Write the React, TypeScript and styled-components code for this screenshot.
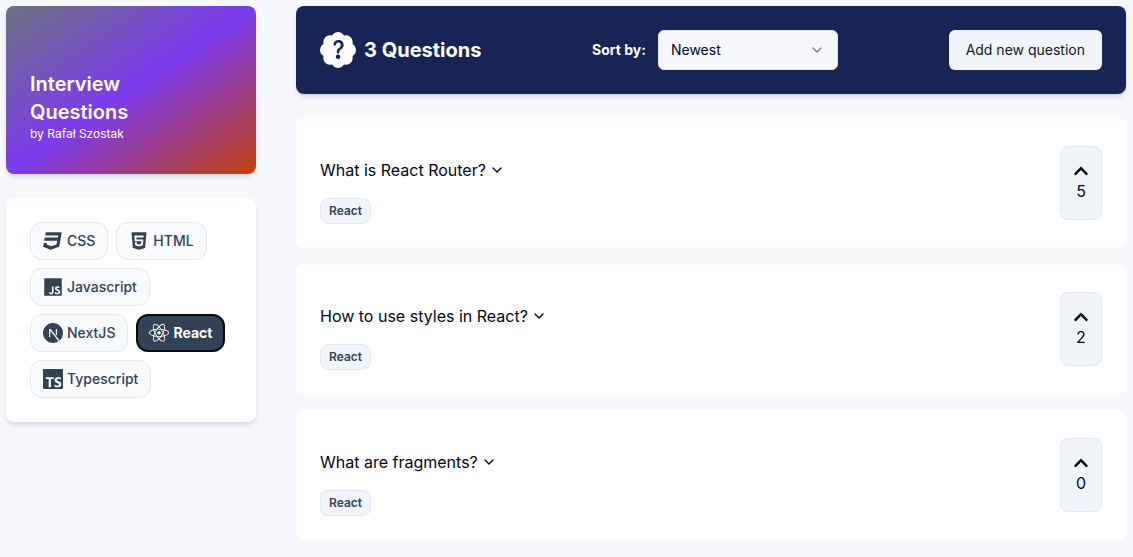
import React from "react";
import styled, { createGlobalStyle } from "styled-components";
import { FaCss3, FaChevronUp } from "react-icons/fa";
import { IoLogoHtml5, IoLogoJavascript } from "react-icons/io5";
import { SiNextdotjs, SiTypescript } from "react-icons/si";
import { GrReactjs } from "react-icons/gr";
import { BsPatchQuestionFill } from "react-icons/bs";
import { FiChevronDown } from "react-icons/fi";
import { ChevronDown } from "lucide-react";

const GlobalStyle = createGlobalStyle`
  *, *::before, *::after { box-sizing: border-box; }
  body {
    margin: 0;
    background: #f7f8fd;
    color: #020617;
    font-family: Inter, "Liberation Sans", sans-serif;
    font-size: 16px;
    line-height: 24px;
  }
  h1, h2, p, ul { margin: 0; padding: 0; }
  ul { list-style: none; }
  button, select { font: inherit; color: inherit; cursor: pointer; }
  svg { display: block; flex: none; }
`;

const shadow = "0 4px 6px -1px rgba(0, 0, 0, 0.1), 0 2px 4px -2px rgba(0, 0, 0, 0.1)";

const Page = styled.div`
  display: grid;
  grid-template-columns: 250px minmax(0, 1fr);
  gap: 40px;
  align-items: start;
  padding: 6px 7px 16px 6px;
`;

const Sidebar = styled.aside`
  display: grid;
  gap: 24px;
`;

const Brand = styled.header`
  padding: 64px 24px 32px;
  border-radius: 8px;
  background: linear-gradient(to bottom right, #6b7280, #7c3aed, #c2410c);
  box-shadow: ${shadow};
  color: #fff;
`;

const BrandTitle = styled.h1`
  font-size: 20px;
  line-height: 28px;
  font-weight: 600;
`;

const BrandAuthor = styled.p`
  font-size: 12px;
  line-height: 16px;
`;

const Filters = styled.nav`
  display: flex;
  flex-wrap: wrap;
  gap: 8px;
  padding: 24px;
  border-radius: 8px;
  background: #fff;
  box-shadow: ${shadow};
`;

const FilterButton = styled.button<{ $active: boolean }>`
  display: flex;
  align-items: center;
  gap: 4px;
  height: 38px;
  padding: 0 ${(p) => (p.$active ? 11 : 12)}px;
  border: ${(p) => (p.$active ? "2px solid #0a0a0a" : "1px solid #e2e8f0")};
  border-radius: 12px;
  background: ${(p) => (p.$active ? "#334155" : "#f8fafc")};
  color: ${(p) => (p.$active ? "#fff" : "#334155")};
  font-size: 14px;
  line-height: 20px;
  font-weight: ${(p) => (p.$active ? 700 : 500)};
`;

const Main = styled.main`
  display: grid;
  gap: 24px;
`;

const Toolbar = styled.div`
  display: flex;
  align-items: center;
  justify-content: space-between;
  padding: 24px;
  border-radius: 8px;
  background: #172554;
  box-shadow: ${shadow};
  color: #fff;
`;

const Count = styled.div`
  display: flex;
  align-items: center;
  gap: 8px;
`;

const CountTitle = styled.h2`
  font-size: 20px;
  line-height: 28px;
  font-weight: 700;
`;

const Sort = styled.div`
  display: flex;
  align-items: center;
  gap: 12px;
`;

const SortLabel = styled.label`
  font-size: 14px;
  line-height: 20px;
  font-weight: 700;
`;

const SelectBox = styled.div`
  display: grid;
  align-items: center;
  width: 180px;
  color: #020617;

  > * { grid-area: 1 / 1; }
  > svg {
    justify-self: end;
    margin-right: 13px;
    opacity: 0.5;
    pointer-events: none;
  }
`;

const Select = styled.select`
  appearance: none;
  width: 100%;
  height: 40px;
  padding: 0 36px 0 12px;
  border: 1px solid #e2e8f0;
  border-radius: 6px;
  background: #f7f8fd;
  font-size: 14px;
`;

const AddButton = styled.button`
  height: 40px;
  padding: 0 17px;
  border: 0;
  border-radius: 6px;
  background: #f1f5f9;
  color: #0f172a;
  font-size: 14px;
  line-height: 20px;
`;

const QuestionList = styled.ul`
  display: grid;
  gap: 16px;
`;

const QuestionCard = styled.li`
  display: flex;
  align-items: center;
  justify-content: space-between;
  padding: 24px;
  border-radius: 8px;
  background: #fff;
`;

const QuestionBody = styled.div`
  display: grid;
  justify-items: start;
  gap: 16px;
  padding-top: 16px;
`;

const QuestionToggle = styled.button`
  display: flex;
  align-items: center;
  gap: 3px;
  padding: 0;
  border: 0;
  background: none;
`;

const Tag = styled.span`
  padding: 4px 8px;
  border: 1px solid #e2e8f0;
  border-radius: 8px;
  background: #f1f5f9;
  color: #334155;
  font-size: 12px;
  line-height: 16px;
  font-weight: 600;
`;

const VoteButton = styled.button`
  display: flex;
  flex-direction: column;
  align-items: center;
  width: 42px;
  padding: 16px 0;
  border: 1px solid #e2e8f0;
  border-radius: 8px;
  background: #f1f5f9;
  line-height: 24px;
`;

const filters = [
  { name: "CSS", Icon: FaCss3 },
  { name: "HTML", Icon: IoLogoHtml5 },
  { name: "Javascript", Icon: IoLogoJavascript },
  { name: "NextJS", Icon: SiNextdotjs },
  { name: "React", Icon: GrReactjs },
  { name: "Typescript", Icon: SiTypescript },
];

const questions = [
  { title: "What is React Router?", tag: "React", votes: 5 },
  { title: "How to use styles in React?", tag: "React", votes: 2 },
  { title: "What are fragments?", tag: "React", votes: 0 },
];

export default function App() {
  const [active, setActive] = React.useState("React");

  return (
    <>
      <GlobalStyle />
      <Page>
        <Sidebar>
          <Brand>
            <BrandTitle>
              Interview
              <br />
              Questions
            </BrandTitle>
            <BrandAuthor>by Rafał Szostak</BrandAuthor>
          </Brand>
          <Filters aria-label="Categories">
            {filters.map(({ name, Icon }) => (
              <FilterButton
                key={name}
                type="button"
                $active={name === active}
                aria-pressed={name === active}
                onClick={() => setActive(name)}
              >
                <Icon size={20} aria-hidden />
                {name}
              </FilterButton>
            ))}
          </Filters>
        </Sidebar>
        <Main>
          <Toolbar>
            <Count>
              <BsPatchQuestionFill size={36} aria-hidden />
              <CountTitle>3 Questions</CountTitle>
            </Count>
            <Sort>
              <SortLabel htmlFor="sort">Sort by:</SortLabel>
              <SelectBox>
                <Select id="sort" defaultValue="Newest">
                  <option>Newest</option>
                  <option>Oldest</option>
                </Select>
                <ChevronDown size={16} aria-hidden />
              </SelectBox>
            </Sort>
            <AddButton type="button">Add new question</AddButton>
          </Toolbar>
          <QuestionList>
            {questions.map((q) => (
              <QuestionCard key={q.title}>
                <QuestionBody>
                  <QuestionToggle type="button">
                    {q.title}
                    <FiChevronDown size={16} aria-hidden />
                  </QuestionToggle>
                  <Tag>{q.tag}</Tag>
                </QuestionBody>
                <VoteButton type="button" aria-label={`Upvote, ${q.votes} votes`}>
                  <FaChevronUp size={16} aria-hidden />
                  {q.votes}
                </VoteButton>
              </QuestionCard>
            ))}
          </QuestionList>
        </Main>
      </Page>
    </>
  );
}
